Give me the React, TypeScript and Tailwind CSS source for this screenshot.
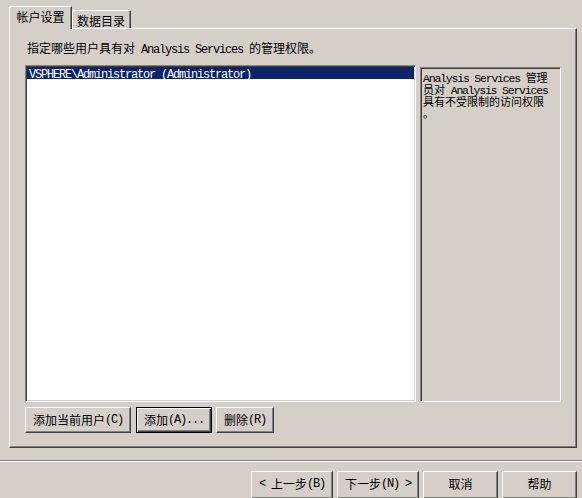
import React from 'react';

const M = ({ children }: { children: React.ReactNode }) => (
  <span className="font-[family-name:Liberation_Mono,monospace] tracking-[-1.2px]">{children}</span>
);

const Btn = ({ children, w, focused }: { children: React.ReactNode; w: string; focused?: boolean }) => (
  <div
    className={`${w} h-[26px] flex items-center justify-center bg-[#d4d0c8] leading-[12px] ${
      focused
        ? 'border border-black shadow-[inset_1px_1px_#ffffff,inset_-1px_-1px_#404040,inset_-2px_-2px_#808080]'
        : 'border border-t-white border-l-white border-r-[#404040] border-b-[#404040] shadow-[inset_-1px_-1px_#808080]'
    }`}
  >
    {children}
  </div>
);

const wizBtn =
  'h-[28px] flex items-center justify-center border border-t-white border-l-white border-r-[#404040] border-b-[#404040] shadow-[inset_-1px_-1px_#808080] pb-[2px] leading-[12px] whitespace-nowrap';

const App = () => {
  return (
    <div className="w-[582px] h-[498px] overflow-hidden bg-[#d4d0c8] text-black text-[12px] font-[family-name:Noto_Sans_CJK_SC,sans-serif] flex flex-col">
      <div className="pl-[9px] pr-[5px] pt-[6px]">
        {/* tabs */}
        <div className="flex items-end h-[22px]">
          <div className="relative z-10 w-[63px] h-[23px] -mb-px bg-[#d4d0c8] border-l border-t border-l-white border-t-white border-r border-r-[#404040] rounded-tl-[2px] shadow-[inset_-1px_0_#808080] flex items-center justify-center pb-[3px] leading-[12px]">
            帐户设置
          </div>
          <div className="w-[59px] h-[18px] bg-[#d4d0c8] border-t border-t-white border-r border-r-[#404040] shadow-[inset_-1px_0_#808080,inset_1px_0_#ffffff] rounded-tl-[2px] flex items-center justify-center pt-[3px] leading-[12px]">
            数据目录
          </div>
        </div>

        {/* panel */}
        <div className="h-[420px] flex flex-col border border-t-white border-l-white border-r-[#404040] border-b-[#404040] shadow-[inset_-1px_-1px_#808080] pl-[15px] pr-[15px] pt-[13px] pb-[14px]">
          <div className="h-[12px] leading-[12px] pl-[2px] whitespace-nowrap">
            指定哪些用户具有对<M> Analysis Services </M>的管理权限。
          </div>
          <div className="flex gap-[4px] mt-[11px] h-[337px]">
            <div className="flex-1 bg-white border border-t-[#808080] border-l-[#808080] border-b-white border-r-white shadow-[inset_1px_1px_#404040,inset_-1px_-1px_#d4d0c8] p-px">
              <div className="h-[12px] leading-[12px] bg-[#0a246a] text-white pl-[2px] whitespace-nowrap">
                <M>VSPHERE\Administrator (Administrator)</M>
              </div>
            </div>
            <div className="w-[141px] mt-[2px] border border-t-[#808080] border-l-[#808080] border-b-white border-r-white shadow-[inset_1px_1px_#404040] pl-[2px] pt-[3px] text-[11px] leading-[12px] whitespace-nowrap">
              <div className="h-[12px]"><M><span className="text-[11.5px]">Analysis Services </span></M>管理</div>
              <div className="h-[12px]">员对<M><span className="text-[11.5px]"> Analysis Services</span></M></div>
              <div className="h-[12px]">具有不受限制的访问权限</div>
              <div className="h-[12px]">。</div>
            </div>
          </div>
          <div className="flex mt-[5px]">
            <Btn w="w-[106px]">添加当前用户<M>(C)</M></Btn>
            <div className="ml-[5px]">
              <Btn w="w-[76px]" focused>添加<M>(A)...</M></Btn>
            </div>
            <div className="ml-[4px]">
              <Btn w="w-[58px]">删除<M>(R)</M></Btn>
            </div>
          </div>
        </div>
      </div>

      {/* separator */}
      <div className="mt-[12px] h-[2px] border-t border-t-[#808080] border-b border-b-white" />

      {/* wizard buttons */}
      <div className="flex justify-end gap-[4px] pr-[5px] mt-[9px]">
        <div className={`w-[82px] ${wizBtn}`}>
          <M>&lt;&nbsp;</M>上一步<M>(B)</M>
        </div>
        <div className={`w-[82px] ${wizBtn}`}>
          下一步<M>(N)&nbsp;&gt;</M>
        </div>
        <div className={`w-[75px] ${wizBtn}`}>取消</div>
        <div className={`w-[75px] ${wizBtn}`}>帮助</div>
      </div>
    </div>
  );
};

export default App;
